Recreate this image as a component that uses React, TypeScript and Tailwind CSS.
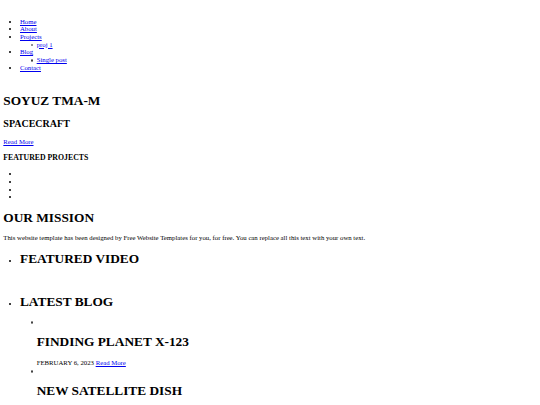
import React from "react";

const A = ({ children }: { children: React.ReactNode }) => (
  <a href="#" className="text-[#0000ee] underline">
    {children}
  </a>
);

const H1 = ({ children, className = "" }: { children: React.ReactNode; className?: string }) => (
  <h1 className={"text-[13.33px] leading-[15.33px] font-bold " + className}>{children}</h1>
);

const Ring = () => (
  <span className="inline-block align-middle -ml-[6px] mr-[3.5px] w-[2.5px] h-[2.5px] rounded-full border-[0.6px] border-[#444]" />
);

export default function App() {
  return (
    <div className="font-['Liberation_Serif',serif] text-[6.75px] leading-[7.67px] text-black bg-white min-h-[405px] p-[3.33px]">
      <div className="h-[7.67px]" />
      <ul className="mt-[6.67px] list-disc pl-[16.67px]">
        <li>
          <A>Home</A>
        </li>
        <li>
          <A>About</A>
        </li>
        <li>
          <A>Projects</A>
          <ul className="list-none pl-[16.67px]">
            <li>
              <Ring />
              <A>proj 1</A>
            </li>
          </ul>
        </li>
        <li>
          <A>Blog</A>
          <ul className="list-none pl-[16.67px]">
            <li>
              <Ring />
              <A>Single post</A>
            </li>
          </ul>
        </li>
        <li>
          <A>Contact</A>
        </li>
      </ul>

      <H1 className="mt-[22px]">SOYUZ TMA-M</H1>
      <h2 className="mt-[8.9px] text-[10px] leading-[11.5px] font-bold">SPACECRAFT</h2>
      <p className="mt-[8.9px]">
        <A>Read More</A>
      </p>
      <h3 className="mt-[7.8px] text-[7.8px] leading-[9px] font-bold">FEATURED PROJECTS</h3>
      <ul className="mt-[7.8px] list-disc pl-[16.67px]">
        <li>{"\u00a0"}</li>
        <li>{"\u00a0"}</li>
        <li>{"\u00a0"}</li>
        <li>{"\u00a0"}</li>
      </ul>

      <H1 className="mt-[8.9px]">OUR MISSION</H1>
      <p className="mt-[8.9px]">
        This website template has been designed by Free Website Templates for you, for free. You can replace all this
        text with your own text.
      </p>

      <ul className="mt-[9.5px] list-disc pl-[16.67px]">
        <li>
          <H1>FEATURED VIDEO</H1>
        </li>
        <li className="mt-[27.5px]">
          <H1>LATEST BLOG</H1>
          <ul className="mt-[8.5px] list-none pl-[16.67px]">
            <li>
              <div>
                <Ring />
                {"\u00a0"}
              </div>
              <H1 className="mt-[8.9px]">FINDING PLANET X-123</H1>
              <div className="mt-[9.5px]">
                FEBRUARY 6, 2023 <A>Read More</A>
              </div>
            </li>
            <li>
              <div>
                <Ring />
                {"\u00a0"}
              </div>
              <H1 className="mt-[8.9px]">NEW SATELLITE DISH</H1>
            </li>
          </ul>
        </li>
      </ul>
    </div>
  );
}
